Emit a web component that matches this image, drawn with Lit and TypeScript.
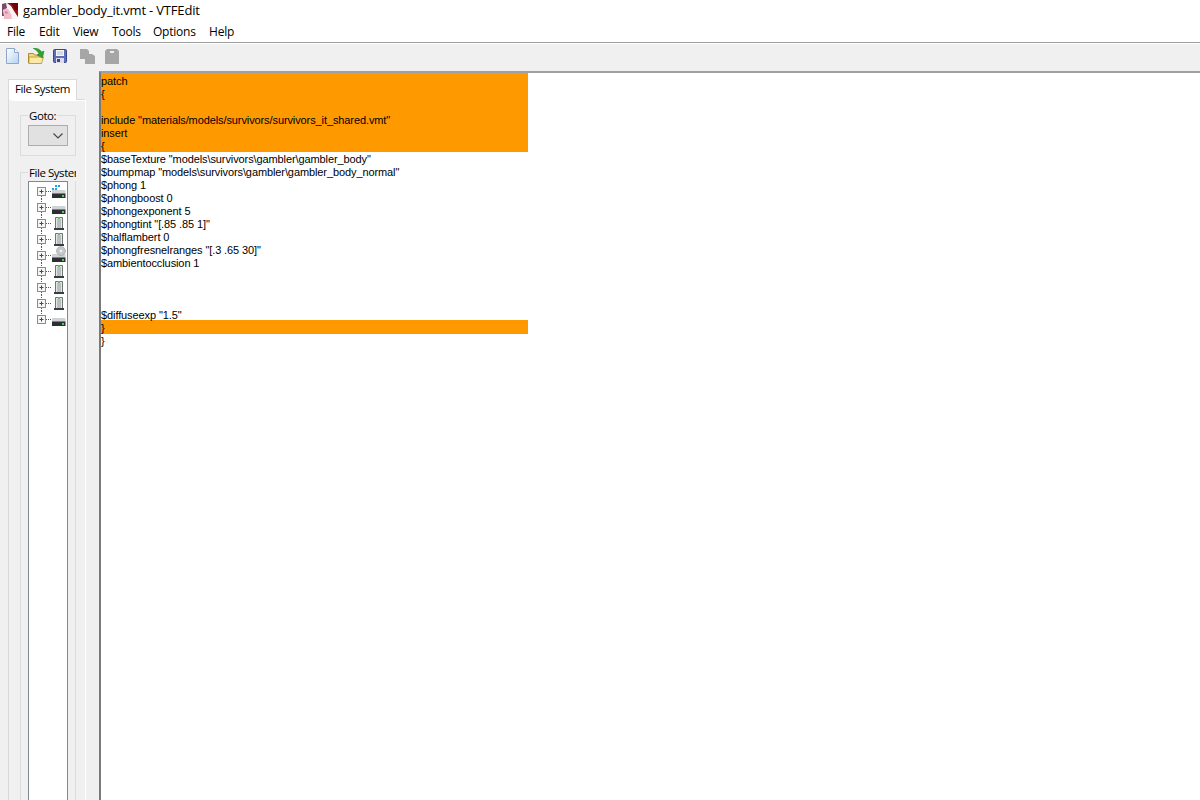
import { LitElement, html, css, svg } from "lit";
import { customElement } from "lit/decorators.js";

const LINES = [
  ["patch", 1], ["{", 1], ["", 1], ['include "materials/models/survivors/survivors_it_shared.vmt"', 1], ["insert", 1], ["{", 1],
  ['$baseTexture "models\\survivors\\gambler\\gambler_body"', 0],
  ['$bumpmap "models\\survivors\\gambler\\gambler_body_normal"', 0],
  ["$phong 1", 0], ["$phongboost 0", 0], ["$phongexponent 5", 0], ['$phongtint "[.85 .85 1]"', 0],
  ["$halflambert 0", 0], ['$phongfresnelranges "[.3 .65 30]"', 0], ["$ambientocclusion 1", 0],
  ["", 0], ["", 0], ["", 0], ['$diffuseexp "1.5"', 0], ["}", 1], ["}", 0],
] as [string, number][];

const drive = svg`<rect x="1" y="7" width="13.5" height="4" rx="1" fill="#cfd3d6"/><rect x="1" y="10.5" width="13.5" height="4.5" fill="#2b2f33"/><rect x="11" y="12" width="2" height="2" fill="#4ccf4c"/>`;
const winDrive = svg`${drive}<g fill="#19a3e8"><rect x="4" y="2" width="2" height="2"/><rect x="7" y="2" width="2" height="2"/><rect x="1" y="5" width="2" height="2"/><rect x="4" y="5" width="2" height="2"/></g>`;
const cdDrive = svg`<rect x="1" y="7" width="13.5" height="4" rx="1" fill="#cfd3d6"/><circle cx="10" cy="4" r="4.5" fill="#c4c8cc" stroke="#9a9ea2" stroke-width=".6"/><circle cx="10" cy="4" r="1.3" fill="#f4f4f4"/><rect x="1" y="10.5" width="13.5" height="4.5" fill="#2b2f33"/><rect x="11" y="12" width="2" height="2" fill="#4ccf4c"/>`;
const usb = svg`<path d="M4.5 2.5h7v11h-7z" fill="#e4e8e8" stroke="#6f7476"/><rect x="6" y="4" width="4" height="9" fill="#b9bebf"/><rect x="7" y="2" width="2" height="2" fill="#62c452"/><rect x="3" y="13" width="10" height="2" fill="#3a3d40"/>`;
const TREE = [winDrive, drive, usb, usb, cdDrive, usb, usb, usb, drive];

@customElement("app-root")
export class AppRoot extends LitElement {
  static styles = css`
    :host { display: block; width: 1200px; height: 800px; overflow: hidden; background: #f0f0f0; font-family: "Open Sans", "Noto Sans", sans-serif; color: #000; }
    .title { height: 22px; background: #fff; display: flex; align-items: center; padding-left: 2px; gap: 5px; font-size: 13px; letter-spacing: -0.18px; }
    .title span { position: relative; top: -1px; }
    .logo { width: 16px; height: 16px; flex: none; }
    .menu { background: #fff; display: grid; grid-template-columns: 32px 34px 39px 41px 56px auto; justify-content: start; padding-left: 7px; font-size: 12px; line-height: 20px; letter-spacing: -0.22px; border-bottom: 1px solid #a0a0a0; box-sizing: border-box; height: 21px; }
    .sep { height: 1px; background: #fff; }
    .toolbar { height: 27px; box-sizing: border-box; display: flex; align-items: center; padding: 0 0 3px 5px; background: #f0f0f0; }
    .toolbar svg { width: 16px; height: 16px; flex: none; }
    .toolbar .open { width: 17px; margin-left: 7px; }
    .toolbar .save { margin-left: 7px; }
    .toolbar .copy { margin-left: 11px; }
    .toolbar .paste { margin-left: 9px; }
    .body { height: 729px; display: flex; }
    .side { width: 99px; flex: none; display: flex; flex-direction: column; padding: 8px 0 0 8px; box-sizing: border-box; overflow: hidden; }
    .tab { flex: none; width: 69px; height: 21px; box-sizing: border-box; border: 1px solid #d9d9d9; border-bottom: 0; background: #fff; font-size: 11.5px; letter-spacing: -0.45px; line-height: 18px; text-align: center; white-space: nowrap; margin-bottom: -1px; position: relative; z-index: 1; }
    .panel { width: 78px; flex: 1; min-height: 0; box-sizing: border-box; border: 1px solid #d9d9d9; border-bottom: 0; border-right-color: #fff; }
    .inner { height: 100%; margin-left: 3px; border-top: 1px solid #fff; padding: 14px 0 0 8px; box-sizing: border-box; background: #f0f0f0; }
    .group { width: 56px; box-sizing: border-box; border: 1px solid #dcdcdc; position: relative; }
    .goto { height: 41px; padding: 9px 7px 0; }
    .fs { height: 700px; margin-top: 16px; padding: 8px 0 0 7px; clip-path: inset(-12px 0 0 0); }
    .legend { position: absolute; left: 7px; top: -8px; background: #f0f0f0; font-size: 11.5px; letter-spacing: -0.45px; line-height: 16px; padding: 0 1px; white-space: nowrap; }
    .select { width: 40px; height: 21px; box-sizing: border-box; border: 1px solid #adadad; background: #e1e1e1; display: flex; align-items: center; justify-content: flex-end; padding-right: 3px; }
    .select svg { width: 12px; height: 8px; }
    .tree { width: 40px; height: 640px; box-sizing: border-box; border: 1px solid #828790; background: #fff; display: flex; flex-direction: column; padding-top: 1px; overflow: hidden; }
    .row { height: 16px; flex: none; display: flex; align-items: center; }
    .row svg { width: 38px; height: 16px; flex: none; overflow: visible; }
    .editor { flex: 1; border-left: 2px solid #7a7a7a; border-top: 2px solid #a0a0a0; background: #fff; font-family: "Liberation Sans", Arial, sans-serif; font-size: 11px; line-height: 17px; letter-spacing: -0.1px; }
    .line { height: 13px; width: 427px; white-space: pre; }
    .hl { background: #ff9900; box-shadow: 0 1px 0 #ff9900; }
  `;

  render() {
    return html`
      <div class="title">
        <svg class="logo" viewBox="0 0 16 16">
          <rect width="16" height="16" fill="#fbf3f5"/>
          <path d="M5 0h11v14l-4-6-3-5z" fill="#9c0f12"/>
          <path d="M9 0h7v7l-3 0z" fill="#6d0508"/>
          <path d="M2 5l4 1 3 5 1 5H2z" fill="#f2bcc8"/>
          <path d="M0 1l4-1 1 5-4 2 1 6-2 0z" fill="#7b4a6a"/>
          <path d="M3 8l3 1-1 2-2-1z" fill="#c98aa8"/>
        </svg>
        <span>gambler_body_it.vmt - VTFEdit</span>
      </div>
      <div class="menu"><span>File</span><span>Edit</span><span>View</span><span>Tools</span><span>Options</span><span>Help</span></div>
      <div class="sep"></div>
      <div class="toolbar">
        <svg viewBox="0 0 16 16"><defs><linearGradient id="pg" x1="0" y1="0" x2="1" y2="1"><stop offset="0" stop-color="#fff"/><stop offset="1" stop-color="#b4d2f2"/></linearGradient></defs><path d="M1.5 .5h8l4 4v11h-12z" fill="url(#pg)" stroke="#8fa6c8"/><path d="M9.5 .5v4h4" fill="#fff" stroke="#8fa6c8"/></svg>
        <svg class="open" viewBox="0 0 17 16"><path d="M.5 5.5h5l1 1.5h7v8H.5z" fill="#f5d77c" stroke="#b38a2e"/><path d="M1 9h14.5l-2 6.5H1z" fill="#fbe9a6" stroke="#b38a2e" stroke-width=".7"/><path d="M5 0c4 0 7 1 8.500 4l2.500-1-1.500 7-5.500-3 2-1C10 3.500 8 2 5 0z" fill="#2fa32f" stroke="#1d7a1d" stroke-width=".5"/></svg>
        <svg class="save" viewBox="0 0 16 16"><rect x="1.500" y="1.500" width="13" height="13" rx="1" fill="#5a6fb8" stroke="#38448c"/><rect x="4" y="2" width="8" height="6" fill="#f5f5f5"/><path d="M5 4h6M5 6h6" stroke="#b8bcd4"/><rect x="4" y="10" width="8" height="5" fill="#dcdce8"/><rect x="5" y="11" width="3" height="3" fill="#3a4590"/></svg>
        <svg class="copy" viewBox="0 0 16 16"><path d="M1 1h7l2 2v3h3l3 2v8H6v-5H1z" fill="#a6a6a6"/></svg>
        <svg class="paste" viewBox="0 0 16 16"><path d="M3 1h10l2 2v13H1V3z" fill="#a6a6a6"/><rect x="6" y="3" width="4" height="2" fill="#ececec"/></svg>
      </div>
      <div class="body">
        <div class="side">
          <div class="tab">File System</div>
          <div class="panel">
            <div class="inner">
              <div class="group goto">
                <div class="legend">Goto:</div>
                <div class="select"><svg viewBox="0 0 12 8"><path d="M1.500 1.500L6 6l4.500-4.500" fill="none" stroke="#444" stroke-width="1.100"/></svg></div>
              </div>
              <div class="group fs">
                <div class="legend">File System</div>
                <div class="tree">
                  ${TREE.map((ic, i) => html`<div class="row"><svg viewBox="0 0 38 16">
                    ${i < TREE.length - 1 ? svg`<path d="M12.500 13v4" stroke="#555" stroke-dasharray="1 1"/>` : ""}
                    ${i > 0 ? svg`<path d="M12.500 0v4" stroke="#555" stroke-dasharray="1 1"/>` : ""}
                    <path d="M17 8.500h5" stroke="#555" stroke-dasharray="1 1"/>
                    <rect x="8.500" y="4.500" width="8" height="8" fill="#f6f6f6" stroke="#8c8c8c"/>
                    <path d="M10.500 8.500h4M12.500 6.500v4" stroke="#2a4a8a"/>
                    <g transform="translate(22 0)">${ic}</g>
                  </svg></div>`)}
                </div>
              </div>
            </div>
          </div>
        </div>
        <div class="editor">
          ${LINES.map(([t, h]) => html`<div class="line ${h ? "hl" : ""}">${t}</div>`)}
        </div>
      </div>
    `;
  }
}
